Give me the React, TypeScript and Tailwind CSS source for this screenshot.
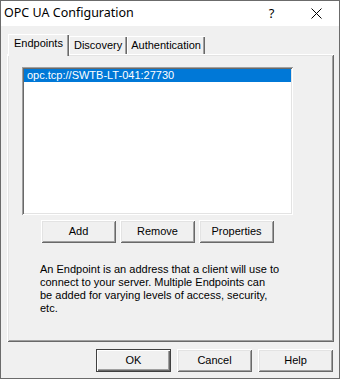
import type { ReactNode } from 'react';

const raised =
  'shadow-[inset_1px_1px_#ffffff,inset_-1px_-1px_#696969,inset_2px_2px_#e3e3e3,inset_-2px_-2px_#a0a0a0]';

function Btn({ children, def }: { children: ReactNode; def?: boolean }) {
  return (
    <button
      type="button"
      className={
        def
          ? 'w-[75px] h-[23px] bg-[#f0f0f0] text-black border border-[#404040] flex items-center justify-center shadow-[inset_1px_1px_#ffffff,inset_-1px_-1px_#696969,inset_-2px_-2px_#a0a0a0]'
          : 'w-[75px] h-[23px] bg-[#f0f0f0] text-black flex items-center justify-center ' + raised
      }
    >
      {children}
    </button>
  );
}

export default function App() {
  return (
    <div className="w-[340px] h-[379px] bg-[#f0f0f0] border border-[#6b6b6b] flex flex-col font-['Liberation_Sans',Arial,sans-serif] text-[11px] text-black leading-[13px]">
      {/* title bar */}
      <div className="h-[25px] bg-white flex items-center">
        <span className="pl-[3px] flex-1 font-['Noto_Sans',sans-serif] text-[12.5px] leading-none">OPC UA Configuration</span>
        <div className="w-[46px] h-full flex items-center justify-center font-['Noto_Sans',sans-serif] text-[13px] pl-[3px]">?</div>
        <div className="w-[46px] h-full flex items-center justify-center">
          <svg width="11" height="11" viewBox="0 0 11 11" fill="none" stroke="#000" strokeWidth="1">
            <path d="M0.5 0.5 L10.5 10.5 M10.5 0.5 L0.5 10.5" />
          </svg>
        </div>
      </div>

      <div className="flex-1 flex flex-col pl-[6px] pr-[5px]">
        {/* tabs */}
        <div className="flex items-end h-[28px] pl-[1px]">
          <div className="relative z-10 h-[22px] -mb-[2px] px-[6px] pb-[4px] bg-[#f0f0f0] flex items-center shadow-[inset_1px_1px_#ffffff,inset_-1px_0_#696969,inset_-2px_0_#a0a0a0]">
            Endpoints
          </div>
          <div className="h-[18px] px-[5px] flex items-center shadow-[inset_1px_1px_#ffffff,inset_-1px_0_#696969,inset_-2px_0_#a0a0a0]">
            Discovery
          </div>
          <div className="h-[18px] px-[4px] flex items-center shadow-[inset_1px_1px_#ffffff,inset_-1px_0_#696969,inset_-2px_0_#a0a0a0]">
            Authentication
          </div>
        </div>

        {/* tab body */}
        <div className={'h-[288px] flex flex-col ' + raised}>
          <div className="ml-[15px] mt-[13px] w-[271px] h-[148px] bg-white p-[2px] shadow-[inset_1px_1px_#a0a0a0,inset_-1px_-1px_#ffffff,inset_2px_2px_#696969,inset_-2px_-2px_#e3e3e3]">
            <div className="h-[13px] bg-[#0078d7] text-white pl-[3px] flex items-center">opc.tcp://SWTB-LT-041:27730</div>
          </div>
          <div className="ml-[34px] mt-[5px] flex gap-[4px]">
            <Btn>Add</Btn>
            <Btn>Remove</Btn>
            <Btn>Properties</Btn>
          </div>
          <p className="ml-[33px] mt-[20px]">
            An Endpoint is an address that a client will use to
            <br />
            connect to your server. Multiple Endpoints can
            <br />
            be added for varying levels of access, security,
            <br />
            etc.
          </p>
        </div>

        {/* dialog buttons */}
        <div className="mt-[7px] flex justify-end gap-[6px] pr-[1px]">
          <Btn def>OK</Btn>
          <Btn>Cancel</Btn>
          <Btn>Help</Btn>
        </div>
      </div>
    </div>
  );
}
